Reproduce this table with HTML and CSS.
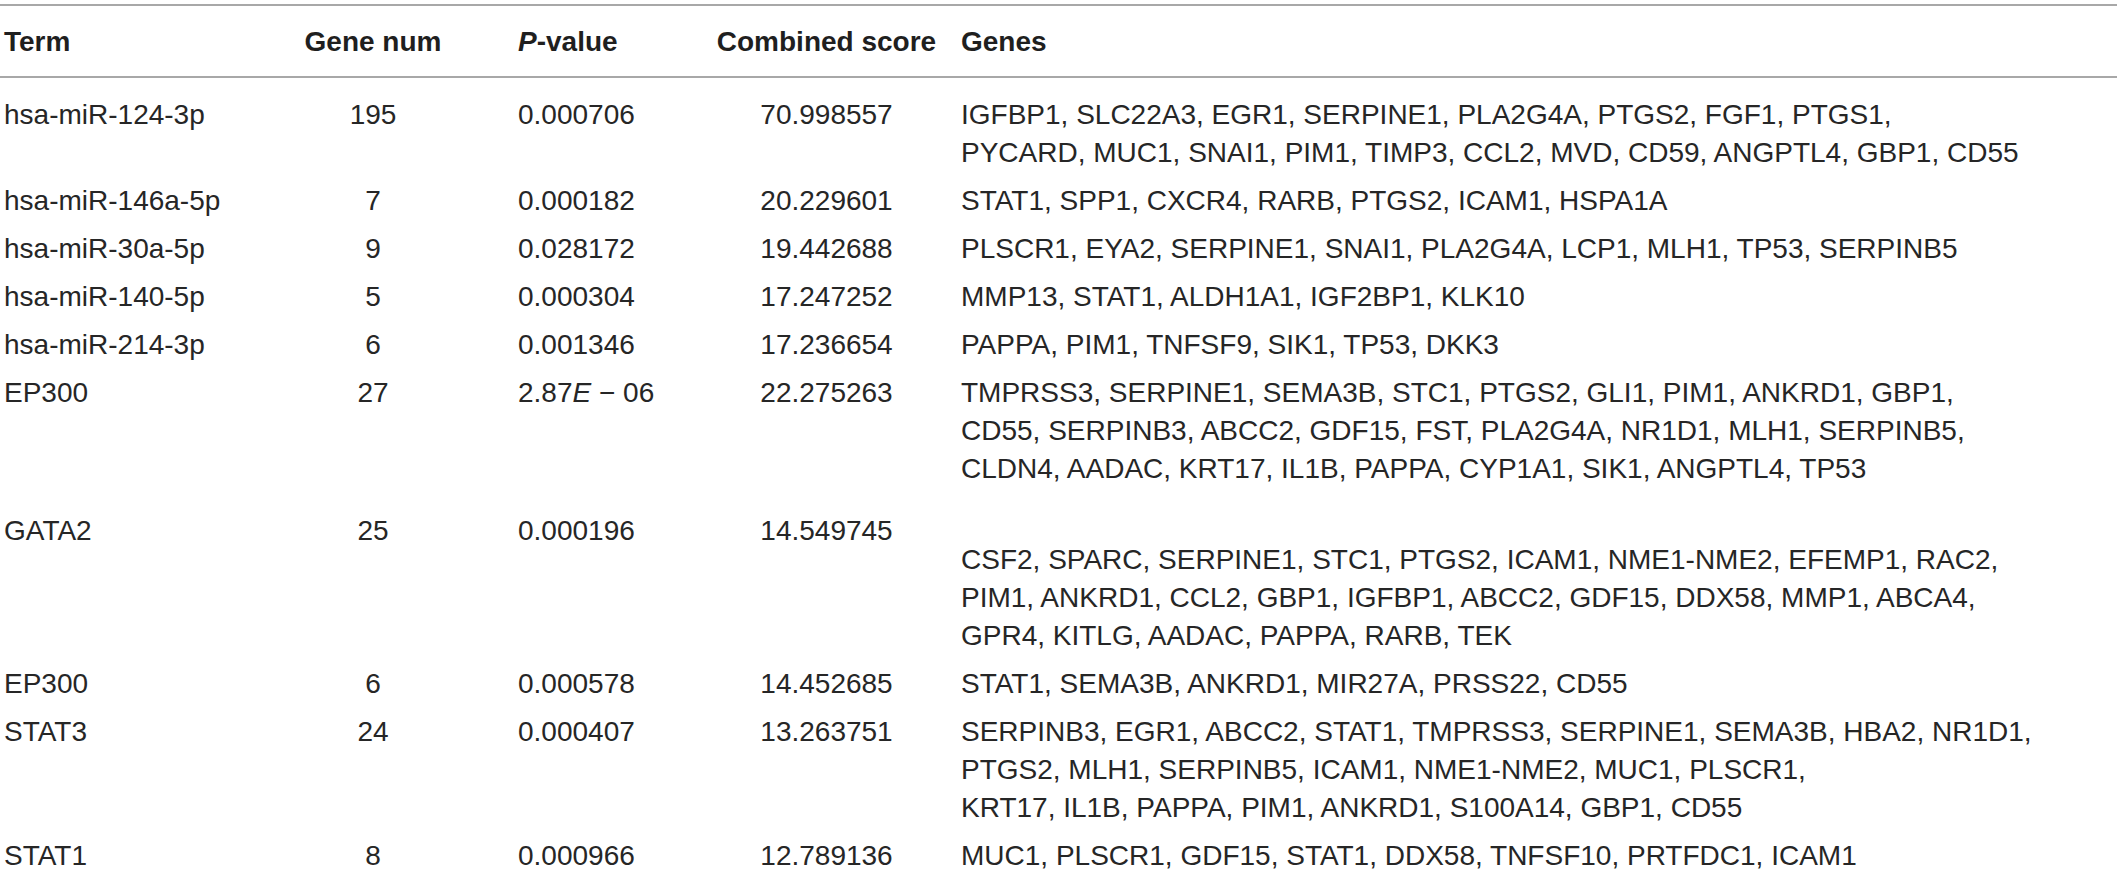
FILE: index.html
```html
<!DOCTYPE html>
<html>
<head>
<meta charset="utf-8">
<link rel="stylesheet" href="styles.css">
</head>
<body>
<table class="tbl">
  <colgroup>
    <col class="c-term">
    <col class="c-num">
    <col class="c-p">
    <col class="c-score">
    <col class="c-genes">
  </colgroup>
  <thead>
    <tr>
      <th class="term">Term</th>
      <th class="num">Gene num</th>
      <th class="p"><i>P</i>-value</th>
      <th class="score">Combined score</th>
      <th class="genes">Genes</th>
    </tr>
  </thead>
  <tbody>
    <tr class="first">
      <td class="term">hsa-miR-124-3p</td>
      <td class="num">195</td>
      <td class="p">0.000706</td>
      <td class="score">70.998557</td>
      <td class="genes">IGFBP1, SLC22A3, EGR1, SERPINE1, PLA2G4A, PTGS2, FGF1, PTGS1,<br>PYCARD, MUC1, SNAI1, PIM1, TIMP3, CCL2, MVD, CD59, ANGPTL4, GBP1, CD55</td>
    </tr>
    <tr>
      <td class="term">hsa-miR-146a-5p</td>
      <td class="num">7</td>
      <td class="p">0.000182</td>
      <td class="score">20.229601</td>
      <td class="genes">STAT1, SPP1, CXCR4, RARB, PTGS2, ICAM1, HSPA1A</td>
    </tr>
    <tr>
      <td class="term">hsa-miR-30a-5p</td>
      <td class="num">9</td>
      <td class="p">0.028172</td>
      <td class="score">19.442688</td>
      <td class="genes">PLSCR1, EYA2, SERPINE1, SNAI1, PLA2G4A, LCP1, MLH1, TP53, SERPINB5</td>
    </tr>
    <tr>
      <td class="term">hsa-miR-140-5p</td>
      <td class="num">5</td>
      <td class="p">0.000304</td>
      <td class="score">17.247252</td>
      <td class="genes">MMP13, STAT1, ALDH1A1, IGF2BP1, KLK10</td>
    </tr>
    <tr>
      <td class="term">hsa-miR-214-3p</td>
      <td class="num">6</td>
      <td class="p">0.001346</td>
      <td class="score">17.236654</td>
      <td class="genes">PAPPA, PIM1, TNFSF9, SIK1, TP53, DKK3</td>
    </tr>
    <tr>
      <td class="term">EP300</td>
      <td class="num">27</td>
      <td class="p">2.87<i>E</i> − 06</td>
      <td class="score">22.275263</td>
      <td class="genes">TMPRSS3, SERPINE1, SEMA3B, STC1, PTGS2, GLI1, PIM1, ANKRD1, GBP1,<br>CD55, SERPINB3, ABCC2, GDF15, FST, PLA2G4A, NR1D1, MLH1, SERPINB5,<br>CLDN4, AADAC, KRT17, IL1B, PAPPA, CYP1A1, SIK1, ANGPTL4, TP53</td>
    </tr>
    <tr class="gata">
      <td class="term">GATA2</td>
      <td class="num">25</td>
      <td class="p">0.000196</td>
      <td class="score">14.549745</td>
      <td class="genes">CSF2, SPARC, SERPINE1, STC1, PTGS2, ICAM1, NME1-NME2, EFEMP1, RAC2,<br>PIM1, ANKRD1, CCL2, GBP1, IGFBP1, ABCC2, GDF15, DDX58, MMP1, ABCA4,<br>GPR4, KITLG, AADAC, PAPPA, RARB, TEK</td>
    </tr>
    <tr>
      <td class="term">EP300</td>
      <td class="num">6</td>
      <td class="p">0.000578</td>
      <td class="score">14.452685</td>
      <td class="genes">STAT1, SEMA3B, ANKRD1, MIR27A, PRSS22, CD55</td>
    </tr>
    <tr>
      <td class="term">STAT3</td>
      <td class="num">24</td>
      <td class="p">0.000407</td>
      <td class="score">13.263751</td>
      <td class="genes">SERPINB3, EGR1, ABCC2, STAT1, TMPRSS3, SERPINE1, SEMA3B, HBA2, NR1D1,<br>PTGS2, MLH1, SERPINB5, ICAM1, NME1-NME2, MUC1, PLSCR1,<br>KRT17, IL1B, PAPPA, PIM1, ANKRD1, S100A14, GBP1, CD55</td>
    </tr>
    <tr>
      <td class="term">STAT1</td>
      <td class="num">8</td>
      <td class="p">0.000966</td>
      <td class="score">12.789136</td>
      <td class="genes">MUC1, PLSCR1, GDF15, STAT1, DDX58, TNFSF10, PRTFDC1, ICAM1</td>
    </tr>
  </tbody>
</table>
</body>
</html>
```

FILE: styles.css
```css
html, body {
  margin: 0;
  padding: 0;
  background: #ffffff;
}

body {
  padding-top: 4px;
  font-family: "Liberation Sans", Arial, sans-serif;
  color: #262626;
}

.tbl {
  width: 2117px;
  border-collapse: collapse;
  table-layout: fixed;
  font-size: 28px;
  line-height: 38px;
}

.c-term { width: 300px; }
.c-num { width: 146px; }
.c-p { width: 267px; }
.c-score { width: 227px; }
.c-genes { width: auto; }

.tbl th,
.tbl td {
  padding: 5px 0;
  vertical-align: top;
  white-space: nowrap;
  text-align: left;
  font-weight: 400;
}

.tbl thead tr {
  border-top: 2px solid #a8a8a8;
  border-bottom: 2px solid #a8a8a8;
}

.tbl th {
  font-weight: 700;
  color: #1f1f1f;
  padding-top: 17px;
  padding-bottom: 15px;
}

.tbl .term { padding-left: 4px; }
.tbl .num { text-align: center; }
.tbl .p { padding-left: 72px; }
.tbl .score { text-align: center; }
.tbl .genes { padding-left: 21px; }

.tbl tr.first td { padding-top: 18px; }

.tbl tr.gata td { padding-top: 19px; }
.tbl tr.gata td.genes { padding-top: 48px; }
```
